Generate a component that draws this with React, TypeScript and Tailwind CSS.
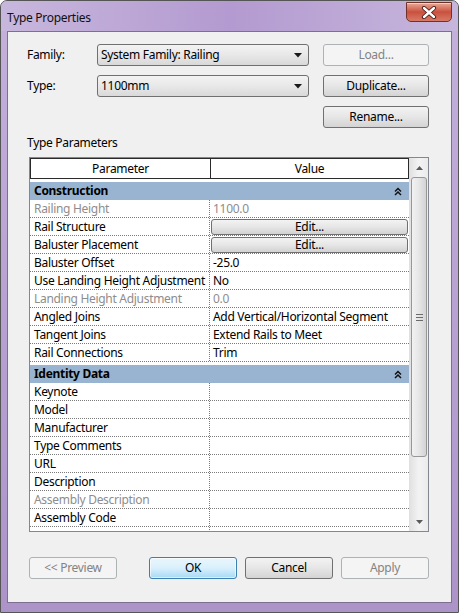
import React from 'react';

type Row = { name: string; value?: string; dim?: boolean; edit?: boolean };

const CONSTRUCTION: Row[] = [
	{ name: 'Railing Height', value: '1100.0', dim: true },
	{ name: 'Rail Structure', edit: true },
	{ name: 'Baluster Placement', edit: true },
	{ name: 'Baluster Offset', value: '-25.0' },
	{ name: 'Use Landing Height Adjustment', value: 'No' },
	{ name: 'Landing Height Adjustment', value: '0.0', dim: true },
	{ name: 'Angled Joins', value: 'Add Vertical/Horizontal Segment' },
	{ name: 'Tangent Joins', value: 'Extend Rails to Meet' },
	{ name: 'Rail Connections', value: 'Trim' },
];

const IDENTITY: Row[] = [
	{ name: 'Keynote' },
	{ name: 'Model' },
	{ name: 'Manufacturer' },
	{ name: 'Type Comments' },
	{ name: 'URL' },
	{ name: 'Description' },
	{ name: 'Assembly Description', dim: true },
	{ name: 'Assembly Code' },
	{ name: '' },
];

const btn = 'h-[22px] rounded-[3px] border border-[#707070] bg-linear-to-b from-[#f3f3f3] via-[#e6e6e6] to-[#d4d4d4] flex items-center justify-center text-black';
const btnOff = 'h-[22px] rounded-[3px] border border-[#adb2b5] bg-[#f4f4f4] flex items-center justify-center text-[#838383]';

function DropArrow() {
	return (
		<svg width="8" height="5" viewBox="0 0 8 5">
			<path d="M0 0 H8 L4 4.5 Z" fill="#1a1a1a" />
		</svg>
	);
}

function Collapse() {
	return (
		<svg width="8" height="9" viewBox="0 0 8 9">
			<path d="M1 4.5 L4 1.5 L7 4.5 M1 8 L4 5 L7 8" fill="none" stroke="#111" strokeWidth="1.5" />
		</svg>
	);
}

function Combo({ text }: { text: string }) {
	return (
		<div className="w-[212px] h-[22px] rounded-[3px] border border-[#707070] bg-linear-to-b from-[#f3f3f3] via-[#e8e8e8] to-[#d9d9d9] flex items-center justify-between pl-[3px] pr-[6px]">
			<span>{text}</span>
			<DropArrow />
		</div>
	);
}

function Group({ title }: { title: string }) {
	return (
		<div className="mt-[3px] h-[19px] bg-[#99b4d1] flex items-center justify-between pl-[4px] pr-[7px] font-bold">
			<span>{title}</span>
			<Collapse />
		</div>
	);
}

function PropRow({ row }: { row: Row }) {
	const tone = row.dim ? 'text-[#8d8d8d]' : 'text-black';
	return (
		<div className="h-[18px] shrink-0 flex border-b border-dotted border-[#7a7a7a]">
			<div className={`w-[180px] shrink-0 pl-[4px] border-r border-dotted border-[#7a7a7a] leading-[18px] whitespace-nowrap ${tone}`}>
				{row.name}
			</div>
			<div className={`flex-1 min-w-0 leading-[18px] whitespace-nowrap ${tone}`}>
				{row.edit ? (
					<div className="mt-[1px] ml-[1px] mr-[1px] h-[16px] rounded-[3px] border border-[#707070] bg-linear-to-b from-[#f3f3f3] via-[#e6e6e6] to-[#d2d2d2] flex items-center justify-center leading-none">
						Edit...
					</div>
				) : (
					<span className="pl-[3px]">{row.value}</span>
				)}
			</div>
		</div>
	);
}

function ScrollBar() {
	return (
		<div className="w-[19px] shrink-0 flex flex-col bg-linear-to-r from-[#e2e2e2] via-[#f3f3f3] to-[#ebebeb] border-l border-[#e0e0e0]">
			<div className="h-[19px] flex items-center justify-center">
				<svg width="7" height="4" viewBox="0 0 7 4"><path d="M0 4 H7 L3.5 0 Z" fill="#5a5a5a" /></svg>
			</div>
			<div className="mx-[1px] h-[280px] rounded-[3px] border border-[#979797] bg-linear-to-r from-[#f2f2f2] via-[#e6e6e6] to-[#d3d3d3] flex items-center justify-center">
				<div className="flex flex-col gap-[2px]">
					<div className="w-[7px] h-px bg-[#6b6b6b]" />
					<div className="w-[7px] h-px bg-[#6b6b6b]" />
					<div className="w-[7px] h-px bg-[#6b6b6b]" />
				</div>
			</div>
			<div className="flex-1" />
			<div className="h-[18px] flex items-center justify-center">
				<svg width="7" height="4" viewBox="0 0 7 4"><path d="M0 0 H7 L3.5 4 Z" fill="#5a5a5a" /></svg>
			</div>
		</div>
	);
}

function CloseButton() {
	return (
		<div className="mt-[1px] w-[46px] h-[20px] rounded-b-[5px] border border-[#6f3129] bg-linear-to-b from-[#e7a897] via-[#c9503e] to-[#d77a66] flex items-center justify-center shadow-[inset_0_1px_0_rgba(255,255,255,0.5)]">
			<svg width="16" height="13" viewBox="0 0 16 13">
				<path d="M3 2 L13 11 M13 2 L3 11" stroke="#4a1a16" strokeWidth="4.2" strokeLinecap="round" />
				<path d="M3 2 L13 11 M13 2 L3 11" stroke="#ffffff" strokeWidth="2.4" strokeLinecap="round" />
			</svg>
		</div>
	);
}

export default function App() {
	return (
		<div className="w-[459px] h-[613px] flex flex-col rounded-t-[7px] border border-[#555] bg-linear-to-b from-[#c4b1db] via-[#b8a2d3] to-[#ac94c9] font-['Noto_Sans',sans-serif] text-[12px] tracking-[-0.3px] text-black overflow-hidden">
			<div className="h-[30px] shrink-0 flex items-start justify-between pl-[6px] pr-[6px] bg-linear-to-r from-[#c8b7dd] via-[#b39ad0] to-[#c6b6dc]">
				<span className="mt-[8px] text-[12px] text-[#101010]">Type Properties</span>
				<CloseButton />
			</div>
			<div className="flex-1 mx-[6px] mb-[9px] border border-[#7d6f90] bg-[#f0f0f0] flex flex-col pt-[12px] pl-[19px]">
				<div className="flex flex-col gap-[9px]">
					<div className="flex items-center">
						<span className="w-[70px]">Family:</span>
						<Combo text="System Family: Railing" />
						<div className={`${btnOff} ml-[14px] w-[106px]`}>Load...</div>
					</div>
					<div className="flex items-center">
						<span className="w-[70px]">Type:</span>
						<Combo text="1100mm" />
						<div className={`${btn} ml-[14px] w-[106px]`}>Duplicate...</div>
					</div>
					<div className="flex items-center">
						<div className={`${btn} ml-[296px] w-[106px]`}>Rename...</div>
					</div>
				</div>
				<div className="mt-[7px] h-[16px] leading-[16px]">Type Parameters</div>
				<div className="mt-[6px] ml-[2px] w-[400px] h-[375px] border border-[#828790] bg-white flex">
					<div className="w-[379px] flex flex-col overflow-hidden">
						<div className="h-[21px] shrink-0 flex border border-[#2a2a2a]">
							<div className="w-[180px] border-r border-[#2a2a2a] flex items-center justify-center">Parameter</div>
							<div className="flex-1 flex items-center justify-center">Value</div>
						</div>
						<Group title="Construction" />
						{CONSTRUCTION.map((r) => <PropRow key={r.name} row={r} />)}
						<Group title="Identity Data" />
						{IDENTITY.map((r, i) => <PropRow key={i} row={r} />)}
					</div>
					<ScrollBar />
				</div>
				<div className="mt-[25px] ml-[2px] flex">
					<div className={`${btnOff} w-[88px]`}>&lt;&lt; Preview</div>
					<div className="ml-[32px] w-[88px] h-[22px] rounded-[3px] border border-[#3c7fb1] bg-linear-to-b from-[#eaf6fd] via-[#d9f0fc] to-[#a7d9f5] shadow-[inset_0_0_0_1px_rgba(255,255,255,0.6)] flex items-center justify-center">OK</div>
					<div className={`${btn} ml-[8px] w-[88px]`}>Cancel</div>
					<div className={`${btnOff} ml-[8px] w-[88px]`}>Apply</div>
				</div>
			</div>
		</div>
	);
}
